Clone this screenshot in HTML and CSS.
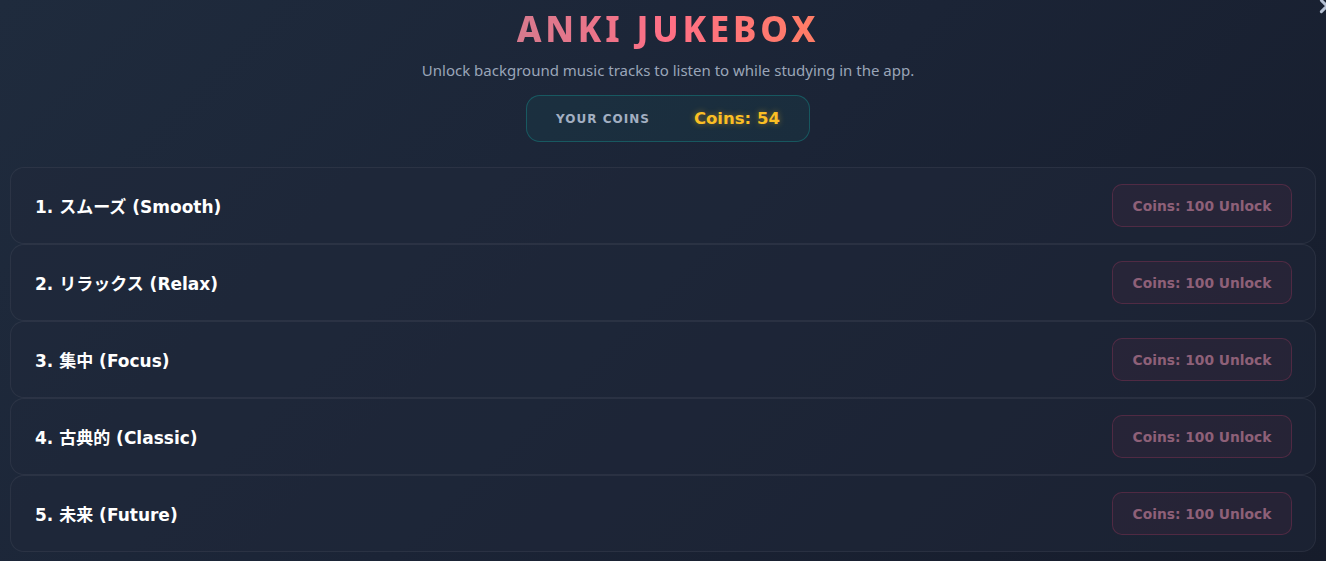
FILE: index.html
```html
<!DOCTYPE html>
<html>
<head>
    <title>Anki Jukebox</title>
    <link rel="stylesheet" href="styles.css">
</head>
<body>
    <button class="close-button" type="button" aria-label="Close">
        <svg viewBox="0 0 16 16" width="18" height="18">
            <path d="M3 3 L13 13 M13 3 L3 13" stroke="currentColor" stroke-width="2.6" stroke-linecap="round" fill="none"/>
        </svg>
    </button>

    <header class="header">
        <h1 class="title">ANKI JUKEBOX</h1>
        <p class="subtitle">Unlock background music tracks to listen to while studying in the app.</p>
        <div class="coin-box">
            <span class="coin-label">Your Coins</span>
            <span class="coin-count">Coins: 54</span>
        </div>
    </header>

    <div class="track-list">
        <div class="track">
            <span class="track-name">1. スムーズ (Smooth)</span>
            <button class="unlock-button" type="button">Coins: 100 Unlock</button>
        </div>
        <div class="track">
            <span class="track-name">2. リラックス (Relax)</span>
            <button class="unlock-button" type="button">Coins: 100 Unlock</button>
        </div>
        <div class="track">
            <span class="track-name">3. 集中 (Focus)</span>
            <button class="unlock-button" type="button">Coins: 100 Unlock</button>
        </div>
        <div class="track">
            <span class="track-name">4. 古典的 (Classic)</span>
            <button class="unlock-button" type="button">Coins: 100 Unlock</button>
        </div>
        <div class="track">
            <span class="track-name">5. 未来 (Future)</span>
            <button class="unlock-button" type="button">Coins: 100 Unlock</button>
        </div>
    </div>
</body>
</html>
```

FILE: styles.css
```css
html {
    height: 100%;
}

body {
    margin: 0;
    min-height: 100%;
    padding: 0 10px;
    background: linear-gradient(135deg, #1f2b3d 0%, #1b2436 50%, #161c2b 100%);
    color: #ffffff;
    font-family: "Noto Sans", "Noto Sans CJK JP", sans-serif;
    overflow: hidden;
}

/* close icon sits half outside the window corner */
.close-button {
    position: absolute;
    top: -3px;
    right: -10px;
    padding: 0;
    border: none;
    background: transparent;
    color: #b4bfd2;
    line-height: 0;
    cursor: pointer;
}

/* header runs to the right window edge, past the list */
.header {
    display: flex;
    flex-direction: column;
    align-items: center;
    margin-right: -10px;
    padding-top: 8px;
}

.title {
    margin: 0;
    font-size: 35px;
    font-weight: 800;
    letter-spacing: 3.8px;
    line-height: 42px;
    background: linear-gradient(90deg, #d67a8e 0%, #ff6f85 50%, #ff7d65 100%);
    -webkit-background-clip: text;
    background-clip: text;
    color: transparent;
}

.subtitle {
    margin: 11px 0 0;
    font-size: 15px;
    line-height: 18px;
    color: #9aa5b8;
}

.coin-box {
    display: flex;
    align-items: center;
    gap: 44px;
    margin-top: 16px;
    padding: 0 29px;
    height: 45px;
    border: 1px solid rgba(20, 170, 160, 0.35);
    border-radius: 14px;
    background: rgba(20, 170, 160, 0.07);
}

.coin-label {
    font-family: "DejaVu Sans", sans-serif;
    font-size: 12px;
    font-weight: 700;
    letter-spacing: 1px;
    text-transform: uppercase;
    color: #a3afc2;
}

.coin-count {
    font-family: "DejaVu Sans", sans-serif;
    font-size: 16.5px;
    font-weight: 700;
    color: #fbbf24;
    text-shadow: 0 0 6px rgba(251, 191, 36, 0.45);
}

.track-list {
    display: flex;
    flex-direction: column;
    margin-top: 25px;
}

.track {
    display: flex;
    align-items: center;
    justify-content: space-between;
    padding: 16px 23px 16px 24px;
    border: 1px solid rgba(255, 255, 255, 0.06);
    border-radius: 14px;
    background: rgba(32, 40, 58, 0.5);
}

.track-name {
    font-family: "DejaVu Sans", "Noto Sans CJK JP", sans-serif;
    font-size: 17px;
    font-weight: 700;
}

.unlock-button {
    width: 180px;
    height: 43px;
    border: 1px solid rgba(190, 60, 100, 0.28);
    border-radius: 10px;
    background: rgba(190, 60, 100, 0.07);
    color: #8e6078;
    font-family: "DejaVu Sans", sans-serif;
    font-size: 13.8px;
    font-weight: 700;
    cursor: pointer;
}
```
